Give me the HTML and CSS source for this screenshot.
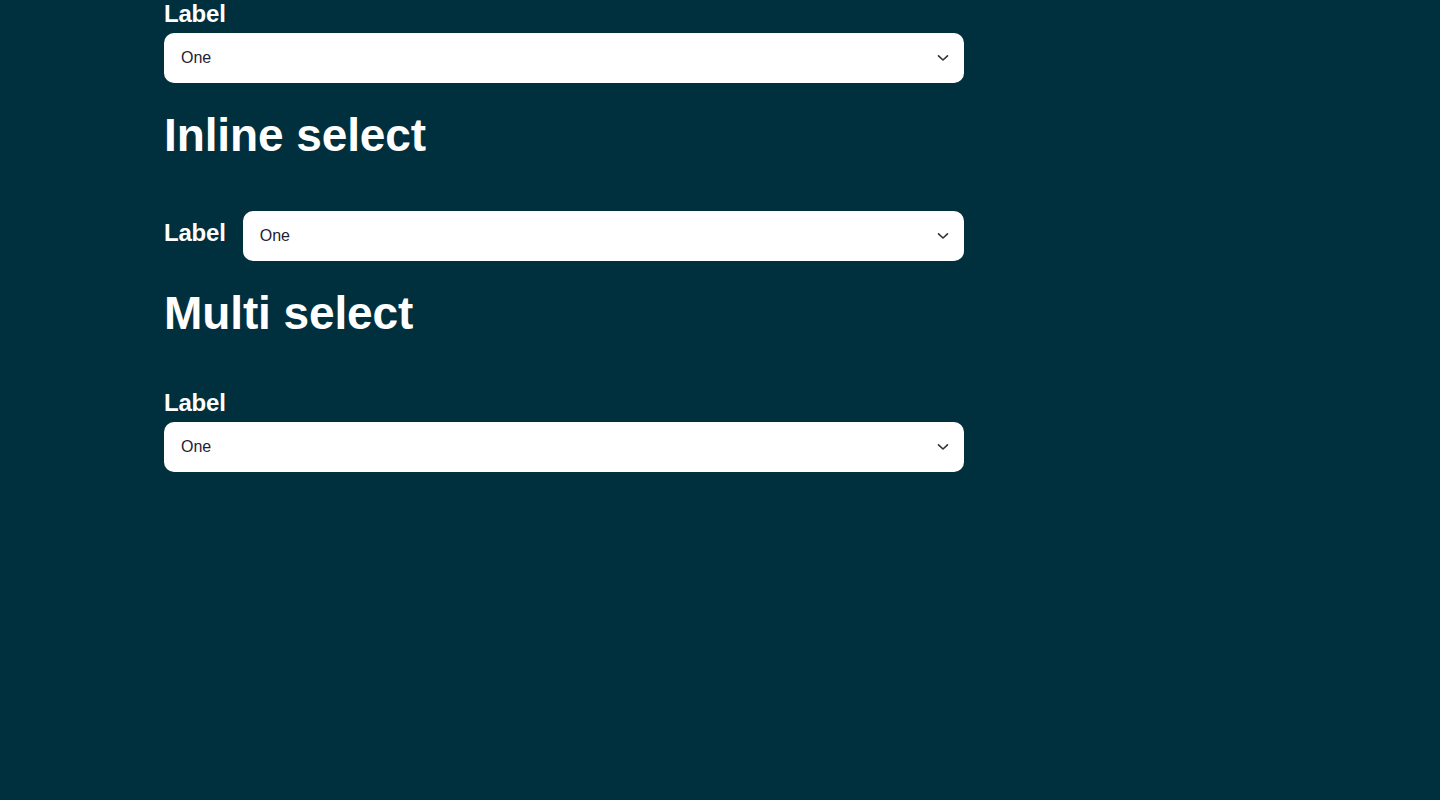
FILE: index.html
```html
<!DOCTYPE html>
<html lang="en">
<head>
<meta charset="utf-8">
<title>Select</title>
<link rel="stylesheet" href="styles.css">
</head>
<body>
<main class="page">
  <div class="field">
    <label class="label">Label</label>
    <div class="select">
      <span class="value">One</span>
      <svg class="chevron" width="12" height="8" viewBox="0 0 12 8"><path d="M1.5 1.8 L6 6 L10.5 1.8" fill="none" stroke="#333" stroke-width="1.6" stroke-linecap="round" stroke-linejoin="round"/></svg>
    </div>
  </div>

  <h2 class="heading">Inline select</h2>

  <div class="field inline">
    <label class="label">Label</label>
    <div class="select">
      <span class="value">One</span>
      <svg class="chevron" width="12" height="8" viewBox="0 0 12 8"><path d="M1.5 1.8 L6 6 L10.5 1.8" fill="none" stroke="#333" stroke-width="1.6" stroke-linecap="round" stroke-linejoin="round"/></svg>
    </div>
  </div>

  <h2 class="heading">Multi select</h2>

  <div class="field">
    <label class="label">Label</label>
    <div class="select">
      <span class="value">One</span>
      <svg class="chevron" width="12" height="8" viewBox="0 0 12 8"><path d="M1.5 1.8 L6 6 L10.5 1.8" fill="none" stroke="#333" stroke-width="1.6" stroke-linecap="round" stroke-linejoin="round"/></svg>
    </div>
  </div>
</main>
</body>
</html>
```

FILE: styles.css
```css
html, body {
  margin: 0;
  padding: 0;
  background: #00303d;
  min-height: 100%;
}
body {
  font-family: "Liberation Sans", Arial, sans-serif;
  color: #ffffff;
  height: 800px;
}
.page {
  width: 800px;
  margin-left: 164px;
  display: flex;
  flex-direction: column;
}
.field {
  display: flex;
  flex-direction: column;
  gap: 5px;
}
.field.inline {
  flex-direction: row;
  align-items: flex-start;
  gap: 17px;
}
.field.inline .label {
  padding-top: 8px;
  flex: none;
}
.field.inline .select {
  flex: 1;
}
.label {
  font-size: 24px;
  line-height: 28px;
  font-weight: 700;
  letter-spacing: -0.2px;
  color: #ffffff;
}
.select {
  height: 50px;
  background: #ffffff;
  border-radius: 10px;
  display: flex;
  align-items: center;
  justify-content: space-between;
  padding: 0 15px 0 17px;
  box-sizing: border-box;
}
.value {
  font-size: 16px;
  color: #1f2233;
}
.chevron {
  display: block;
}
.heading {
  margin: 24px 0 48px;
  font-size: 46px;
  line-height: 56px;
  font-weight: 700;
  letter-spacing: -0.1px;
  color: #ffffff;
}
```
